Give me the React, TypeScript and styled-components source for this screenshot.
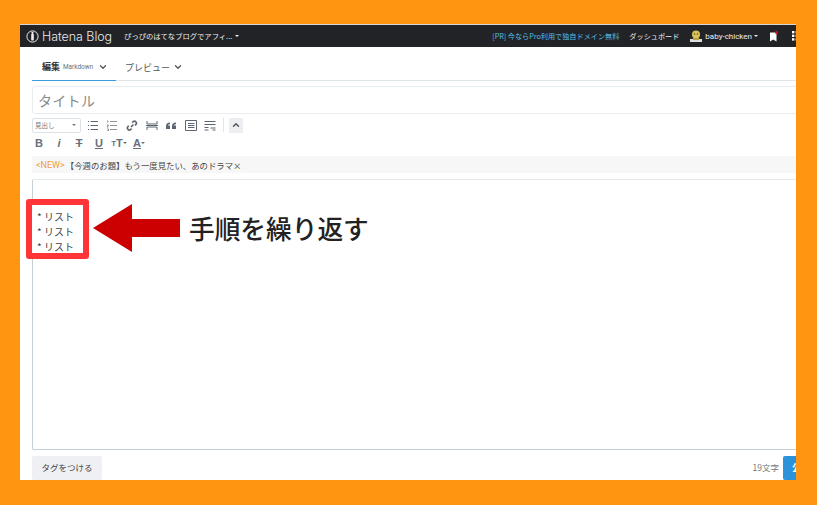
import React from "react";
import styled, { createGlobalStyle } from "styled-components";
import { ChevronDown, ChevronUp } from "lucide-react";

const Global = createGlobalStyle`
  html, body {
    margin: 0;
    padding: 0;
    background: #ff9511;
  }
  body {
    font-family: "Noto Sans CJK JP", "Noto Sans", sans-serif;
  }
`;

const Page = styled.div`
  width: 817px;
  height: 505px;
  padding: 24px 21px 25px 20px;
  box-sizing: border-box;
  overflow: hidden;
`;

const Win = styled.div`
  position: relative;
  width: 776px;
  height: 456px;
  background: #fff;
  overflow: hidden;
`;

const Nav = styled.div`
  display: flex;
  align-items: center;
  width: 800px;
  height: 23px;
  box-sizing: border-box;
  background: #212326;
  border-top: 1px solid #d8d8d8;
  padding-left: 6px;
  color: #fff;
`;

const Brand = styled.div`
  display: flex;
  align-items: center;
  gap: 3px;
  font-family: "Inter", sans-serif;
  font-weight: 300;
  font-size: 12.4px;
  color: #e8e8e8;
  white-space: nowrap;
`;

const BlogName = styled.div`
  margin-left: 12px;
  font-size: 7.3px;
  color: #f0f0f0;
  white-space: nowrap;
  display: flex;
  align-items: center;
  gap: 3px;
`;

const Caret = styled.span`
  display: inline-block;
  width: 0;
  height: 0;
  border-left: 2px solid transparent;
  border-right: 2px solid transparent;
  border-top: 2px solid currentColor;
`;

const NavRight = styled.div`
  margin-left: auto;
  display: flex;
  align-items: center;
  font-size: 7.15px;
  white-space: nowrap;
`;

const Promo = styled.span`
  color: #55bfe8;
  margin-right: 10px;
`;

const Dash = styled.span`
  color: #eee;
  margin-right: 10px;
`;

const UserName = styled.span`
  display: flex;
  align-items: center;
  gap: 2px;
  margin-left: 2px;
  font-family: "Roboto", sans-serif;
  font-size: 8px;
  color: #eee;
`;

const NavIcons = styled.div`
  display: flex;
  align-items: center;
  gap: 14px;
  margin-left: 11px;
  margin-right: 18px;
`;

const Tabs = styled.div`
  display: flex;
  height: 34px;
  margin: 0 0 5px 12px;
  width: 790px;
  box-sizing: border-box;
  border-bottom: 1px solid #dfe6ea;
`;

const Tab = styled.div<{ $active?: boolean }>`
  display: flex;
  align-items: center;
  gap: 3px;
  box-sizing: border-box;
  height: 34px;
  padding: 6px 0 0 ${(p) => (p.$active ? "10px" : "9px")};
  width: ${(p) => (p.$active ? "84px" : "80px")};
  font-size: 9px;
  color: ${(p) => (p.$active ? "#333" : "#555")};
  font-weight: ${(p) => (p.$active ? 700 : 400)};
  border-bottom: ${(p) => (p.$active ? "1px solid #3f9be0" : "none")};
`;

const TabHint = styled.span`
  font-family: "Roboto", sans-serif;
  font-weight: 400;
  font-size: 6.4px;
  color: #6a7078;
  margin-right: 2px;
`;

const Body = styled.div`
  width: 790px;
  margin-left: 12px;
`;

const TitleBox = styled.div`
  height: 28px;
  box-sizing: border-box;
  border: 1px solid #e8edef;
  border-radius: 3px;
  padding-left: 5px;
  display: flex;
  align-items: center;
  font-size: 14px;
  color: #8a8a8a;
  letter-spacing: 0.3px;
`;

const ToolRow = styled.div`
  display: flex;
  align-items: center;
  height: 16px;
`;

const FirstRow = styled(ToolRow)`
  margin-top: 3px;
`;

const SecondRow = styled(ToolRow)`
  margin: 2px 0 0 -3px;
`;

const HeadSelect = styled.div`
  width: 49px;
  height: 15px;
  box-sizing: border-box;
  border: 1px solid #dde2e6;
  border-radius: 2px;
  display: flex;
  align-items: center;
  justify-content: space-between;
  padding: 0 4px 0 2px;
  font-size: 6.5px;
  color: #777;
  margin-right: 2px;
`;

const Tool = styled.span`
  display: flex;
  align-items: center;
  justify-content: center;
  width: 19.6px;
  height: 15px;
  color: #5d6670;
`;

const Sep = styled.span`
  width: 1px;
  height: 14px;
  background: #e3e6e8;
  margin: 0 5px 0 3px;
`;

const Collapse = styled.span`
  display: flex;
  align-items: center;
  justify-content: center;
  width: 14px;
  height: 15px;
  background: #eceef1;
  color: #555;
`;

const TextTool = styled.span`
  display: flex;
  align-items: center;
  justify-content: center;
  width: 20px;
  height: 16px;
  font-family: "Liberation Sans", sans-serif;
  font-size: 11px;
  font-weight: 700;
  color: #68707a;
`;

const SmallT = styled.span`
  font-size: 8px;
`;

const Topic = styled.div`
  display: flex;
  align-items: center;
  height: 17px;
  margin-top: 5px;
  padding-left: 4px;
  background: #f7f7f7;
  font-size: 8.4px;
  color: #444;
  white-space: nowrap;
`;

const NewMark = styled.span`
  color: #f0a040;
  font-family: "Roboto", sans-serif;
  font-size: 9px;
  margin-right: 1px;
`;

const Editor = styled.div`
  height: 271px;
  margin-top: 6px;
  box-sizing: border-box;
  border: 1px solid #e4e8ea;
  border-left-color: #c4d0d6;
  border-bottom-color: #c4d0d6;
  border-radius: 2px;
`;

const Footer = styled.div`
  display: flex;
  align-items: flex-start;
  margin-top: 6px;
`;

const TagBtn = styled.div`
  width: 70px;
  height: 24px;
  box-sizing: border-box;
  padding-top: 5px;
  text-align: center;
  background: #eff0f3;
  border-radius: 2px;
  font-size: 8.5px;
  color: #444;
`;

const Count = styled.div`
  margin-left: auto;
  margin-top: 5px;
  font-size: 8.5px;
  color: #777;
`;

const Publish = styled.div`
  width: 39px;
  height: 24px;
  margin-left: 4px;
  box-sizing: border-box;
  padding: 5px 0 0 9px;
  background: #2a93dc;
  border-radius: 2px;
  font-size: 9px;
  font-weight: 700;
  color: #fff;
`;

const Callout = styled.div`
  position: absolute;
  left: 6px;
  top: 175px;
  width: 63px;
  height: 60px;
  box-sizing: border-box;
  border: 6.5px solid #ff3538;
  border-radius: 3px;
  background: #fff;
  padding: 3.5px 0 0 5px;
  font-size: 10px;
  line-height: 15px;
  color: #444;
  white-space: nowrap;
`;

const Arrow = styled.svg`
  position: absolute;
  left: 72px;
  top: 179px;
`;

const Note = styled.div`
  position: absolute;
  left: 169px;
  top: 186px;
  font-size: 25.7px;
  line-height: 36px;
  font-weight: 500;
  color: #222;
  white-space: nowrap;
`;

const ico = { width: 12, height: 11, viewBox: "0 0 12 11", fill: "none", stroke: "currentColor", strokeWidth: 1 };

const App: React.FC = () => {
  return (
    <>
      <Global />
      <Page>
        <Win>
          <Nav>
            <Brand>
              <svg width="13" height="13" viewBox="0 0 13 13" fill="none">
                <circle cx="6.5" cy="6.5" r="5.6" stroke="#eee" strokeWidth="1" />
                <rect x="5.2" y="3.6" width="2.6" height="7" rx="1.2" fill="#eee" />
                <circle cx="6.5" cy="2.8" r="1.1" fill="#eee" />
              </svg>
              Hatena Blog
            </Brand>
            <BlogName>
              ぴっぴのはてなブログでアフィ... <Caret />
            </BlogName>
            <NavRight>
              <Promo>[PR] 今ならPro利用で独自ドメイン無料</Promo>
              <Dash>ダッシュボード</Dash>
              <svg width="14" height="14" viewBox="0 0 14 14">
                <circle cx="7" cy="5.5" r="4" fill="#d9c35a" />
                <circle cx="5.6" cy="5" r="0.7" fill="#5a4a1a" />
                <circle cx="8.4" cy="5" r="0.7" fill="#5a4a1a" />
                <rect x="1" y="10" width="12" height="3" fill="#ddd" />
                <rect x="4" y="9" width="6" height="2" fill="#b9a043" />
              </svg>
              <UserName>
                baby-chicken <Caret />
              </UserName>
              <NavIcons>
                <svg width="9" height="11" viewBox="0 0 9 11">
                  <path d="M1 1.5h6.5v9L4.2 8.4 1 10.5z" fill="#fff" />
                  <circle cx="7.5" cy="1.5" r="1.5" fill="#e0101a" />
                </svg>
                <svg width="10" height="10" viewBox="0 0 10 10" fill="#fff">
                  <rect x="0" y="0" width="2.4" height="2.4" />
                  <rect x="3.6" y="0" width="2.4" height="2.4" />
                  <rect x="0" y="3.6" width="2.4" height="2.4" />
                  <rect x="3.6" y="3.6" width="2.4" height="2.4" />
                  <rect x="0" y="7.2" width="2.4" height="2.4" />
                  <rect x="3.6" y="7.2" width="2.4" height="2.4" />
                </svg>
              </NavIcons>
            </NavRight>
          </Nav>

          <Tabs>
            <Tab $active>
              編集 <TabHint>Markdown</TabHint>
              <ChevronDown size={10} strokeWidth={3} color="#555" />
            </Tab>
            <Tab>
              プレビュー
              <ChevronDown size={10} strokeWidth={3} color="#555" />
            </Tab>
          </Tabs>

          <Body>
            <TitleBox>タイトル</TitleBox>

            <FirstRow>
              <HeadSelect>
                見出し <Caret />
              </HeadSelect>
              <Tool>
                <svg {...ico}>
                  <path d="M3.5 1.5H11M3.5 5.5H11M3.5 9.5H11M1 1.5h1M1 5.5h1M1 9.5h1" />
                </svg>
              </Tool>
              <Tool>
                <svg {...ico}>
                  <path d="M4 1.5H11M4 5.5H11M4 9.5H11M1 1h1v1.5M1 5h1.5L1 7h1.5M1 9h1.5v2H1" strokeWidth=".7" />
                </svg>
              </Tool>
              <Tool>
                <svg {...ico} strokeWidth={1.6}>
                  <path d="M5 7l2.4-2.4M6.2 2.6l1-1a2 2 0 0 1 2.8 2.8l-1 1M5.6 8.6l-1 1a2 2 0 0 1-2.8-2.8l1-1" />
                </svg>
              </Tool>
              <Tool>
                <svg {...ico}>
                  <path d="M1 1v3h10V1M1 10V7h10v3M0 5.5h12" />
                </svg>
              </Tool>
              <Tool>
                <svg {...ico} fill="currentColor" stroke="none">
                  <path d="M5 2.5C2.5 2.5 1 4 1 6v3h4V5.5H3C3 4.6 4 4.2 5 4.2zM11 2.5C8.5 2.5 7 4 7 6v3h4V5.5H9C9 4.6 10 4.2 11 4.2z" />
                </svg>
              </Tool>
              <Tool>
                <svg {...ico}>
                  <path d="M.5.5h11v10H.5zM3 3.5h6.5M3 5.5h6.5M3 7.5h6.5" />
                </svg>
              </Tool>
              <Tool>
                <svg {...ico}>
                  <path d="M.5 1.5h11M.5 4.5h11M.5 7.5h4M.5 10h4M6.5 8h5M8.5 10h3" />
                </svg>
              </Tool>
              <Sep />
              <Collapse>
                <ChevronUp size={10} strokeWidth={3.5} />
              </Collapse>
            </FirstRow>

            <SecondRow>
              <TextTool>B</TextTool>
              <TextTool as="i">i</TextTool>
              <TextTool>
                <s>T</s>
              </TextTool>
              <TextTool>
                <u>U</u>
              </TextTool>
              <TextTool>
                <SmallT>T</SmallT>T<Caret />
              </TextTool>
              <TextTool>
                <u>A</u>
                <Caret />
              </TextTool>
            </SecondRow>

            <Topic>
              <NewMark>&lt;NEW&gt;</NewMark>【今週のお題】もう一度見たい、あのドラマ×
            </Topic>

            <Editor />

            <Footer>
              <TagBtn>タグをつける</TagBtn>
              <Count>19文字</Count>
              <Publish>公開</Publish>
            </Footer>
          </Body>

          <Callout>
            * リスト
            <br />
            * リスト
            <br />
            * リスト
          </Callout>
          <Arrow width="90" height="50" viewBox="0 0 90 50">
            <path d="M1 25 L40 1 V16 H88 V34 H40 V49 Z" fill="#cc0000" />
          </Arrow>
          <Note>手順を繰り返す</Note>
        </Win>
      </Page>
    </>
  );
};

export default App;
